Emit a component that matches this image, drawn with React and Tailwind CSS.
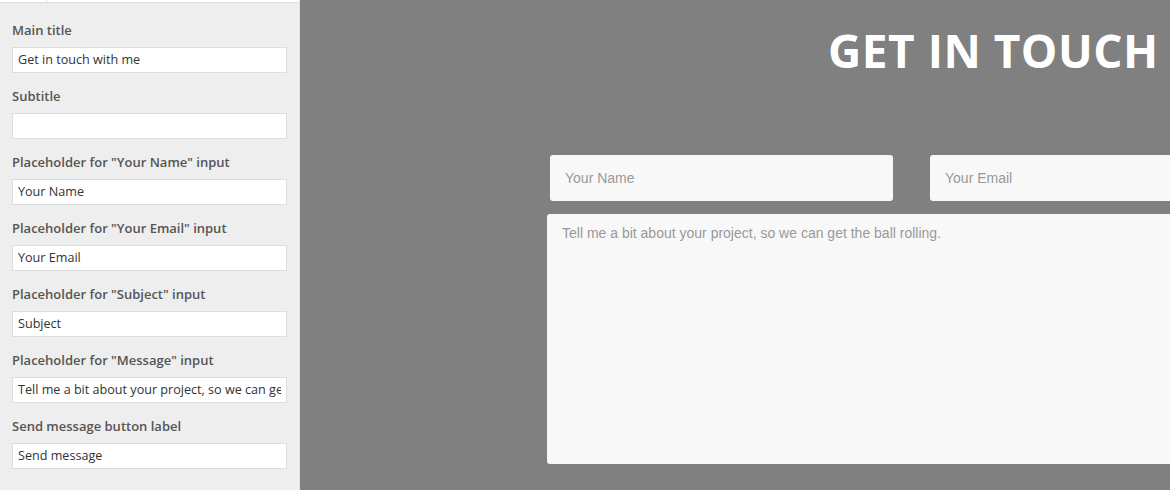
const fields = [
  { label: 'Main title', value: 'Get in touch with me' },
  { label: 'Subtitle', value: '' },
  { label: 'Placeholder for "Your Name" input', value: 'Your Name' },
  { label: 'Placeholder for "Your Email" input', value: 'Your Email' },
  { label: 'Placeholder for "Subject" input', value: 'Subject' },
  { label: 'Placeholder for "Message" input', value: 'Tell me a bit about your project, so we can get the ball rolling.' },
  { label: 'Send message button label', value: 'Send message' },
]

const Sidebar = () => {
  return (
    <div className="w-[300px] shrink-0 h-full bg-[#eeeeee] border-r border-[#e2e2e2] font-['Open_Sans',sans-serif]">
      {/* tab strip */}
      <div className="h-[3px] bg-white border-b border-[#dcdcdc] flex">
        <div className="w-[47px] border-r border-[#dcdcdc]" />
        <div className="w-[250px]" />
      </div>
      <div className="pl-[12px] pr-[13px] pt-[19px]">
        {fields.map((f) => (
          <div key={f.label} className="h-[66px]">
            <div className="text-[13px] leading-[16px] font-semibold text-[#555555] mb-[8px]">{f.label}</div>
            <input
              type="text"
              defaultValue={f.value}
              className="w-[275px] h-[26px] bg-white border border-[#dddddd] px-[5px] text-[12.6px] text-[#333333] outline-none font-['Open_Sans',sans-serif]"
            />
          </div>
        ))}
      </div>
    </div>
  )
}

const Preview = () => {
  return (
    <div className="flex-1 h-full bg-[#808080] overflow-hidden">
      <h1 className="pl-[528px] pt-[22px] whitespace-nowrap text-white font-bold text-[46px] leading-[56px] font-['Open_Sans',sans-serif] tracking-[0.5px]">
        GET IN TOUCH WITH ME
      </h1>
      <div className="mt-[77px] flex flex-col w-[900px]">
        <div className="flex gap-[37px] pl-[250px]">
          <input
            type="text"
            placeholder="Your Name"
            className="w-[343px] h-[46px] shrink-0 rounded-[3px] bg-[#f8f8f8] px-[15px] text-[14px] font-['Liberation_Sans',sans-serif] text-[#555555] placeholder:text-[#999999] outline-none"
          />
          <input
            type="text"
            placeholder="Your Email"
            className="w-[343px] h-[46px] shrink-0 rounded-[3px] bg-[#f8f8f8] px-[15px] text-[14px] font-['Liberation_Sans',sans-serif] text-[#555555] placeholder:text-[#999999] outline-none"
          />
        </div>
        <div className="pl-[247px] mt-[13px]">
          <textarea
            placeholder="Tell me a bit about your project, so we can get the ball rolling."
            className="w-[700px] h-[250px] rounded-[3px] bg-[#f8f8f8] px-[15px] pt-[9px] text-[14px] font-['Liberation_Sans',sans-serif] text-[#555555] placeholder:text-[#999999] outline-none resize-none block"
          />
        </div>
      </div>
    </div>
  )
}

export default function App() {
  return (
    <div className="w-[1170px] h-[490px] flex overflow-hidden">
      <Sidebar />
      <Preview />
    </div>
  )
}
